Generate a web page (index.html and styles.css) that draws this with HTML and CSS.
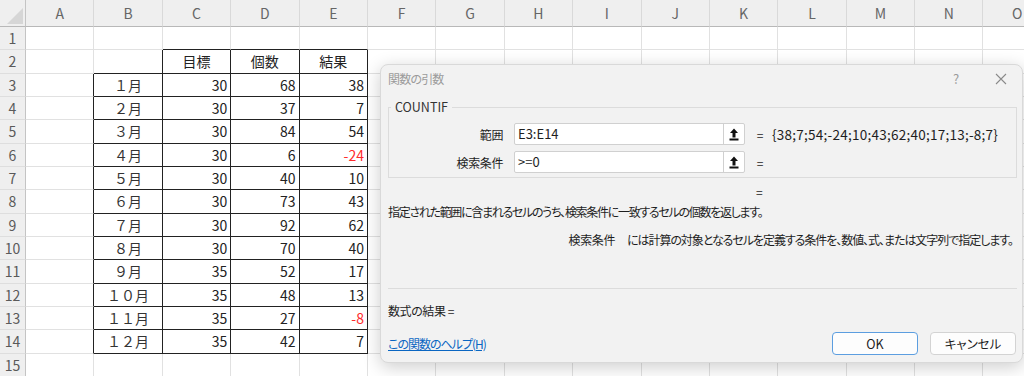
FILE: index.html
```html
<!DOCTYPE html>
<html lang="ja">
<head>
    <meta charset="UTF-8">
    <title>関数の引数</title>
    <link rel="stylesheet" href="styles.css">
</head>
<body>
    <div class="sheet">
        <div class="row col-head">
            <span class="corner"></span><span>A</span><span>B</span><span>C</span><span>D</span><span>E</span><span>F</span><span>G</span><span>H</span><span>I</span><span>J</span><span>K</span><span>L</span><span>M</span><span>N</span><span>O</span>
        </div>
        <div class="row">
            <span class="rh">1</span><span></span><span></span><span class="bb"></span><span class="bb"></span><span class="bb"></span><span></span><span></span><span></span><span></span><span></span><span></span><span></span><span></span><span></span><span></span>
        </div>
        <div class="row">
            <span class="rh">2</span><span></span><span class="br bb"></span><span class="hd br bb">目標</span><span class="hd br bb">個数</span><span class="hd br bb">結果</span><span></span><span></span><span></span><span></span><span></span><span></span><span></span><span></span><span></span><span></span>
        </div>
        <div class="row">
            <span class="rh">3</span><span class="br"></span><span class="m br bb">１月</span><span class="n br bb">30</span><span class="n br bb">68</span><span class="n br bb">38</span><span></span><span></span><span></span><span></span><span></span><span></span><span></span><span></span><span></span><span></span>
        </div>
        <div class="row">
            <span class="rh">4</span><span class="br"></span><span class="m br bb">２月</span><span class="n br bb">30</span><span class="n br bb">37</span><span class="n br bb">7</span><span></span><span></span><span></span><span></span><span></span><span></span><span></span><span></span><span></span><span></span>
        </div>
        <div class="row">
            <span class="rh">5</span><span class="br"></span><span class="m br bb">３月</span><span class="n br bb">30</span><span class="n br bb">84</span><span class="n br bb">54</span><span></span><span></span><span></span><span></span><span></span><span></span><span></span><span></span><span></span><span></span>
        </div>
        <div class="row">
            <span class="rh">6</span><span class="br"></span><span class="m br bb">４月</span><span class="n br bb">30</span><span class="n br bb">6</span><span class="n br bb neg">-24</span><span></span><span></span><span></span><span></span><span></span><span></span><span></span><span></span><span></span><span></span>
        </div>
        <div class="row">
            <span class="rh">7</span><span class="br"></span><span class="m br bb">５月</span><span class="n br bb">30</span><span class="n br bb">40</span><span class="n br bb">10</span><span></span><span></span><span></span><span></span><span></span><span></span><span></span><span></span><span></span><span></span>
        </div>
        <div class="row">
            <span class="rh">8</span><span class="br"></span><span class="m br bb">６月</span><span class="n br bb">30</span><span class="n br bb">73</span><span class="n br bb">43</span><span></span><span></span><span></span><span></span><span></span><span></span><span></span><span></span><span></span><span></span>
        </div>
        <div class="row">
            <span class="rh">9</span><span class="br"></span><span class="m br bb">７月</span><span class="n br bb">30</span><span class="n br bb">92</span><span class="n br bb">62</span><span></span><span></span><span></span><span></span><span></span><span></span><span></span><span></span><span></span><span></span>
        </div>
        <div class="row">
            <span class="rh">10</span><span class="br"></span><span class="m br bb">８月</span><span class="n br bb">30</span><span class="n br bb">70</span><span class="n br bb">40</span><span></span><span></span><span></span><span></span><span></span><span></span><span></span><span></span><span></span><span></span>
        </div>
        <div class="row">
            <span class="rh">11</span><span class="br"></span><span class="m br bb">９月</span><span class="n br bb">35</span><span class="n br bb">52</span><span class="n br bb">17</span><span></span><span></span><span></span><span></span><span></span><span></span><span></span><span></span><span></span><span></span>
        </div>
        <div class="row">
            <span class="rh">12</span><span class="br"></span><span class="m br bb">１０月</span><span class="n br bb">35</span><span class="n br bb">48</span><span class="n br bb">13</span><span></span><span></span><span></span><span></span><span></span><span></span><span></span><span></span><span></span><span></span>
        </div>
        <div class="row">
            <span class="rh">13</span><span class="br"></span><span class="m br bb">１１月</span><span class="n br bb">35</span><span class="n br bb">27</span><span class="n br bb neg">-8</span><span></span><span></span><span></span><span></span><span></span><span></span><span></span><span></span><span></span><span></span>
        </div>
        <div class="row">
            <span class="rh">14</span><span class="br"></span><span class="m br bb">１２月</span><span class="n br bb">35</span><span class="n br bb">42</span><span class="n br bb">7</span><span></span><span></span><span></span><span></span><span></span><span></span><span></span><span></span><span></span><span></span>
        </div>
        <div class="row">
            <span class="rh">15</span><span></span><span></span><span></span><span></span><span></span><span></span><span></span><span></span><span></span><span></span><span></span><span></span><span></span><span></span><span></span>
        </div>
    </div>

    <!-- 関数の引数 dialog -->
    <div class="dialog">
        <div class="dialog-title">
            <span class="title-text">関数の引数</span>
            <div class="title-buttons">
                <span class="help">?</span>
                <span class="close">
                    <svg width="12" height="12" viewBox="0 0 12 12"><path d="M1 1 L11 11 M11 1 L1 11" stroke="#8a8a8a" stroke-width="1.1" fill="none"/></svg>
                </span>
            </div>
        </div>

        <fieldset class="args">
            <legend>COUNTIF</legend>
            <div class="arg-row">
                <label class="arg-label">範囲</label>
                <div class="ref-input">
                    <span class="ref-text">E3:E14</span>
                    <span class="ref-btn">
                        <svg width="10" height="13" viewBox="0 0 10 13"><path d="M5 0.5 L9 5 H6.5 V9.5 H3.5 V5 H1 Z" fill="#111"/><rect x="0.5" y="10.5" width="9" height="2" fill="#111"/></svg>
                    </span>
                </div>
                <span class="eq">=</span>
                <span class="arg-value">{38;7;54;-24;10;43;62;40;17;13;-8;7}</span>
            </div>
            <div class="arg-row">
                <label class="arg-label">検索条件</label>
                <div class="ref-input">
                    <span class="ref-text">&gt;=0</span>
                    <span class="ref-btn">
                        <svg width="10" height="13" viewBox="0 0 10 13"><path d="M5 0.5 L9 5 H6.5 V9.5 H3.5 V5 H1 Z" fill="#111"/><rect x="0.5" y="10.5" width="9" height="2" fill="#111"/></svg>
                    </span>
                </div>
                <span class="eq">=</span>
                <span class="arg-value"></span>
            </div>
        </fieldset>

        <div class="result-line"><span class="eq">=</span></div>
        <p class="desc">指定された範囲に含まれるセルのうち、検索条件に一致するセルの個数を返します。</p>
        <div class="arg-desc">
            <span class="arg-name">検索条件</span>
            <span class="arg-text">には計算の対象となるセルを定義する条件を、数値、式、または文字列で指定します。</span>
        </div>

        <div class="divider"></div>
        <div class="formula-result">数式の結果 =</div>

        <div class="dialog-footer">
            <a href="#" class="help-link">この関数のヘルプ(H)</a>
            <div class="buttons">
                <button class="btn btn-primary">OK</button>
                <button class="btn">キャンセル</button>
            </div>
        </div>
    </div>
</body>
</html>
```

FILE: styles.css
```css
* {
    box-sizing: border-box;
}

body {
    margin: 0;
    width: 1024px;
    height: 376px;
    overflow: hidden;
    position: relative;
    background: #fff;
    font-family: "Noto Sans CJK JP", "Noto Sans", sans-serif;
    color: #222;
}

/* spreadsheet grid */
.sheet {
    width: 1053px;
}

.row {
    display: grid;
    grid-template-columns: 26px repeat(15, 68.4px);
    height: 23.33px;
}

.row span {
    border-right: 1px solid #e1e1e1;
    border-bottom: 1px solid #e1e1e1;
    font-size: 14px;
    line-height: 22px;
    white-space: nowrap;
    overflow: hidden;
}

.col-head {
    height: 27px;
    background: #efefef;
}

.col-head span {
    border-right-color: #d9d9d9;
    border-bottom-color: #b8b8b8;
    text-align: center;
    color: #666;
    line-height: 26px;
}

.col-head .corner {
    position: relative;
    border-right-color: #c4c4c4;
}

.corner::after {
    content: "";
    position: absolute;
    right: 2px;
    bottom: 2px;
    border-style: solid;
    border-width: 0 0 16px 16px;
    border-color: transparent transparent #d6d6d6 transparent;
}

.row .rh {
    background: #efefef;
    color: #5a5a5a;
    text-align: center;
    border-right-color: #c4c4c4;
    border-bottom-color: #dedede;
}

.row .br {
    border-right-color: #222;
}

.row .bb {
    border-bottom-color: #222;
}

.hd, .m {
    text-align: center;
}

.m {
    color: #333;
}

.n {
    text-align: right;
    padding-right: 3px;
}

.row .neg {
    color: #ff2b2b;
}

/* dialog */
.dialog {
    position: absolute;
    left: 380px;
    top: 64px;
    width: 643px;
    height: 299px;
    padding: 0 5px 0 7px;
    background: #f2f2f2;
    border: 1px solid #d9d9d9;
    border-radius: 8px;
    box-shadow: 0 4px 18px rgba(0, 0, 0, 0.2);
    font-size: 12px;
    letter-spacing: -0.4px;
    color: #1e1e1e;
    font-feature-settings: "palt";
}

.dialog-title {
    height: 27px;
    display: flex;
    align-items: center;
    justify-content: space-between;
    color: #9b9b9b;
}

.title-text {
    letter-spacing: -0.8px;
}

.title-buttons {
    display: flex;
    align-items: center;
    gap: 25px;
    margin-right: 6px;
}

.title-buttons span {
    width: 20px;
    text-align: center;
}

.help {
    font-size: 13px;
    color: #9a9a9a;
}

.close svg {
    display: block;
    margin: 0 auto;
}

.args {
    margin: 7px 0 0;
    padding: 0 0 4px;
    min-width: 0;
    border: 1px solid #dcdcdc;
}

.args legend {
    margin-left: 2px;
    padding: 0 4px;
    line-height: 16px;
    font-size: 12.5px;
    letter-spacing: 0;
    color: #333;
}

.arg-row {
    display: flex;
    align-items: center;
    height: 22px;
    margin-top: 6px;
}

.arg-row:first-of-type {
    margin-top: 8px;
}

.arg-label {
    width: 114px;
    flex-shrink: 0;
    text-align: right;
    margin-right: 11px;
}

.ref-input {
    width: 231px;
    height: 22px;
    flex-shrink: 0;
    display: flex;
    background: #fff;
    border: 1px solid #d0d0d0;
    border-radius: 2px;
}

.ref-text {
    flex: 1;
    padding-left: 3px;
    line-height: 20px;
    font-size: 13px;
    letter-spacing: 0;
}

.ref-btn {
    width: 21px;
    border-left: 1px solid #d0d0d0;
    display: flex;
    align-items: center;
    justify-content: center;
}

.eq {
    width: 8px;
    flex-shrink: 0;
    text-align: center;
    margin-left: 11px;
    margin-right: 8px;
    letter-spacing: 0;
}

.arg-value {
    font-size: 13.5px;
    letter-spacing: 0.25px;
    white-space: nowrap;
}

.result-line {
    height: 20px;
    line-height: 20px;
    margin-top: 4px;
    padding-left: 357px;
}

.desc {
    margin: 0;
    height: 20px;
    line-height: 20px;
    letter-spacing: -1.3px;
    white-space: nowrap;
}

.arg-desc {
    display: flex;
    height: 20px;
    line-height: 20px;
    margin-top: 8px;
    white-space: nowrap;
}

.arg-name {
    width: 227px;
    flex-shrink: 0;
    text-align: right;
    margin-right: 12px;
    letter-spacing: -0.4px;
}

.arg-text {
    letter-spacing: -1.05px;
}

.divider {
    height: 1px;
    margin-top: 38px;
    background: #dcdcdc;
}

.formula-result {
    height: 20px;
    line-height: 20px;
    margin-top: 12px;
}

.dialog-footer {
    display: flex;
    align-items: center;
    justify-content: space-between;
    margin-top: 11px;
}

.help-link {
    color: #0a66c2;
    text-decoration: underline;
    letter-spacing: -1px;
}

.buttons {
    display: flex;
    gap: 12px;
    margin-right: 1px;
}

.btn {
    width: 86px;
    height: 23px;
    padding: 0;
    background: #fdfdfd;
    border: 1px solid #d3d3d3;
    border-radius: 4px;
    font-family: inherit;
    font-size: 12.5px;
    color: #1e1e1e;
    font-feature-settings: "palt";
}

.btn-primary {
    border-color: #5c9ee0;
}
```
